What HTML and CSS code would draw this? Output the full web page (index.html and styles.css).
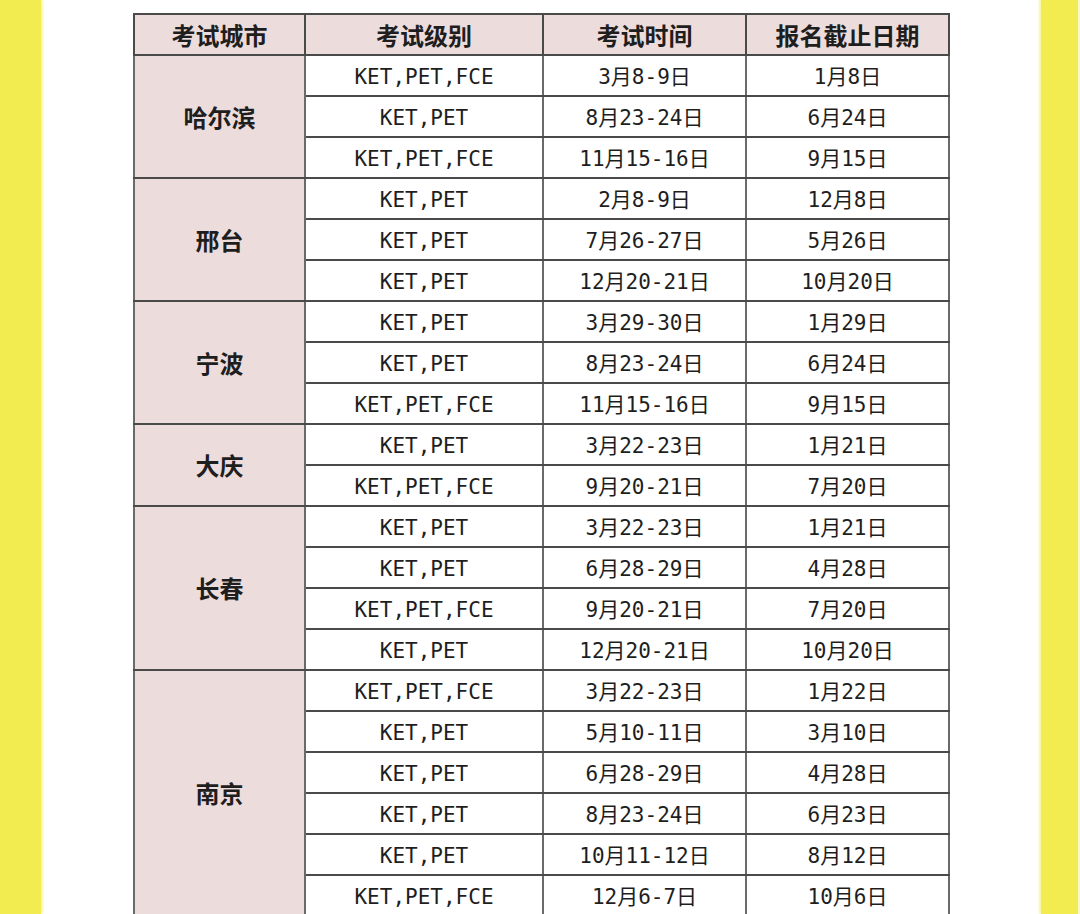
FILE: index.html
```html
<!DOCTYPE html>
<html lang="zh">
<head>
<meta charset="utf-8">
<link rel="stylesheet" href="styles.css">
</head>
<body>
<div class="page">
  <div class="band band-left"></div>
  <main class="content">
    <table class="schedule">
      <colgroup>
        <col class="c1"><col class="c2"><col class="c3"><col class="c4">
      </colgroup>
      <thead>
        <tr><th>考试城市</th><th>考试级别</th><th>考试时间</th><th>报名截止日期</th></tr>
      </thead>
      <tbody>
        <tr><td class="city" rowspan="3">哈尔滨</td><td>KET,PET,FCE</td><td>3月8-9日</td><td>1月8日</td></tr>
        <tr><td>KET,PET</td><td>8月23-24日</td><td>6月24日</td></tr>
        <tr><td>KET,PET,FCE</td><td>11月15-16日</td><td>9月15日</td></tr>
        <tr><td class="city" rowspan="3">邢台</td><td>KET,PET</td><td>2月8-9日</td><td>12月8日</td></tr>
        <tr><td>KET,PET</td><td>7月26-27日</td><td>5月26日</td></tr>
        <tr><td>KET,PET</td><td>12月20-21日</td><td>10月20日</td></tr>
        <tr><td class="city" rowspan="3">宁波</td><td>KET,PET</td><td>3月29-30日</td><td>1月29日</td></tr>
        <tr><td>KET,PET</td><td>8月23-24日</td><td>6月24日</td></tr>
        <tr><td>KET,PET,FCE</td><td>11月15-16日</td><td>9月15日</td></tr>
        <tr><td class="city" rowspan="2">大庆</td><td>KET,PET</td><td>3月22-23日</td><td>1月21日</td></tr>
        <tr><td>KET,PET,FCE</td><td>9月20-21日</td><td>7月20日</td></tr>
        <tr><td class="city" rowspan="4">长春</td><td>KET,PET</td><td>3月22-23日</td><td>1月21日</td></tr>
        <tr><td>KET,PET</td><td>6月28-29日</td><td>4月28日</td></tr>
        <tr><td>KET,PET,FCE</td><td>9月20-21日</td><td>7月20日</td></tr>
        <tr><td>KET,PET</td><td>12月20-21日</td><td>10月20日</td></tr>
        <tr><td class="city" rowspan="6">南京</td><td>KET,PET,FCE</td><td>3月22-23日</td><td>1月22日</td></tr>
        <tr><td>KET,PET</td><td>5月10-11日</td><td>3月10日</td></tr>
        <tr><td>KET,PET</td><td>6月28-29日</td><td>4月28日</td></tr>
        <tr><td>KET,PET</td><td>8月23-24日</td><td>6月23日</td></tr>
        <tr><td>KET,PET</td><td>10月11-12日</td><td>8月12日</td></tr>
        <tr><td>KET,PET,FCE</td><td>12月6-7日</td><td>10月6日</td></tr>
      </tbody>
    </table>
  </main>
  <div class="band band-right"></div>
  <div class="edge"></div>
</div>
</body>
</html>
```

FILE: styles.css
```css
html, body {
  margin: 0;
  padding: 0;
  background: #ffffff;
  height: 100%;
  overflow: hidden;
}

.page {
  display: flex;
  width: 1080px;
  height: 914px;
  overflow: hidden;
}

.band {
  flex: none;
  background: #f3ec50;
}

.band-left {
  width: 41px;
  box-shadow: 2px 0 2px #f8f4a8;
}

.band-right {
  width: 37px;
  box-shadow: -2px 0 2px #f8f4a8;
}

.edge {
  flex: none;
  width: 2px;
  background: #fbf8c8;
}

.content {
  flex: 1;
  padding: 13px 0 0 92px;
  overflow: hidden;
}

.schedule {
  border-collapse: collapse;
  table-layout: fixed;
  width: 815px;
  color: #222;
}

.c1 { width: 171px; }
.c2 { width: 238px; }
.c3 { width: 203px; }
.c4 { width: 203px; }

.schedule th,
.schedule td {
  border: 2px solid #4a4a4a;
  text-align: center;
  vertical-align: middle;
  padding: 0;
}

.schedule tr {
  height: 41px;
}

.schedule th {
  background: #eddcdc;
  font-family: "Noto Sans CJK SC", sans-serif;
  font-weight: 700;
  font-size: 24px;
  line-height: 1;
  color: #1e1e1e;
}

.schedule td {
  font-family: "DejaVu Sans Mono", "Noto Sans CJK SC", monospace;
  font-size: 21px;
  line-height: 1;
  color: #1e1e1e;
  padding-top: 3px;
  border-left-color: #6a6a6a;
  border-right-color: #6a6a6a;
}

.schedule td.city {
  background: #eddcdc;
  font-family: "Noto Sans CJK SC", sans-serif;
  font-weight: 700;
  font-size: 24px;
  padding-top: 0;
}
```
